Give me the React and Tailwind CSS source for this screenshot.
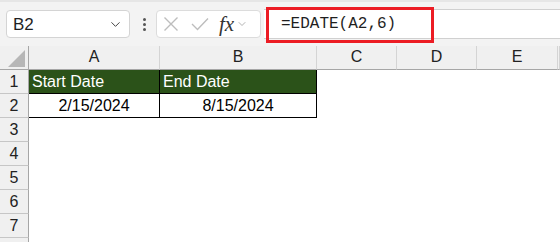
import { ChevronDown } from "lucide-react";

const cols = ["A", "B", "C", "D", "E", ""];
const rows = [1, 2, 3, 4, 5, 6, 7, 8];

function Cell({ row, col }) {
  if (row === 1 && col < 2) {
    return (
      <div className="h-[24px] bg-[#2b5219] border-r border-b border-black px-[3px] text-white leading-[23px]">
        {col === 0 ? "Start Date" : "End Date"}
      </div>
    );
  }
  if (row === 2 && col < 2) {
    return (
      <div className="h-[24px] bg-white border-r border-b border-black text-center text-black leading-[23px]">
        {col === 0 ? "2/15/2024" : "8/15/2024"}
      </div>
    );
  }
  return <div className="h-[24px] bg-white" />;
}

export default function App() {
  return (
    <div className="w-[560px] h-[242px] overflow-hidden bg-white font-['Liberation_Sans',Arial,sans-serif]">
      <div className="relative h-[46px] bg-[#f3f3f3] flex items-start pt-[10px] pl-[6px] border-t-2 border-[#e6e6e6]">
        <div className="w-[124px] h-[28px] bg-white border border-[#d4d4d4] rounded-[4px] flex items-center justify-between pl-[6px] pr-[6px] -mt-[2px]">
          <span className="text-[17px] leading-none text-[#1f1f1f]">B2</span>
          <ChevronDown size={15} strokeWidth={1.6} className="text-[#444]" />
        </div>
        <div className="ml-[13px] mr-[10px] h-[28px] -mt-[2px] flex flex-col justify-center gap-[2px]">
          <span className="w-[3px] h-[3px] bg-[#555] rounded-full" />
          <span className="w-[3px] h-[3px] bg-[#555] rounded-full" />
          <span className="w-[3px] h-[3px] bg-[#555] rounded-full" />
        </div>
        <div className="w-[105px] h-[28px] -mt-[2px] bg-white border border-[#dcdcdc] rounded-[4px] flex items-center pl-[6px]">
          <svg width="16" height="16" viewBox="0 0 16 16" className="mr-[12px]">
            <path d="M1.5 1.5 L14.5 14.5 M14.5 1.5 L1.5 14.5" stroke="#bdbdbd" strokeWidth="1.4" fill="none" />
          </svg>
          <svg width="18" height="14" viewBox="0 0 18 14" className="mr-[10px]">
            <path d="M1 7 L6.5 12.5 L17 1.5" stroke="#bdbdbd" strokeWidth="1.4" fill="none" />
          </svg>
          <span className="font-['Liberation_Serif',serif] italic text-[21px] leading-none text-[#333] mr-[2px]">
            fx
          </span>
          <ChevronDown size={12} strokeWidth={1.5} className="text-[#999]" />
        </div>
        <div className="flex-1 h-[30px] -mt-[3px] ml-[3px] bg-white border-y border-[#d0d0d0] flex items-center pl-[17px]">
          <span className="font-['Liberation_Mono',monospace] text-[16px] text-[#1f1f1f]">=EDATE(A2,6)</span>
        </div>
        <div className="absolute left-[266px] top-[5px] w-[168px] h-[36px] border-[3.5px] border-[#ec1c24] pointer-events-none" />
      </div>
      <div className="grid grid-cols-[29px_131px_157px_80px_80px_81px_1fr] text-[16px]">
        <div className="h-[24px] bg-[#f0f0f0] border-r border-b border-[#a6a6a6] flex items-end justify-end pr-[3px] pb-[2px]">
          <svg width="17" height="17" viewBox="0 0 17 17">
            <path d="M17 0 L17 17 L0 17 Z" fill="#b7b7b7" />
          </svg>
        </div>
        {cols.map((c, i) => (
          <div
            key={i}
            className="h-[24px] bg-[#f0f0f0] border-r border-[#d4d4d4] border-b border-b-[#a6a6a6] text-center text-[#222] leading-[22px]"
          >
            {c}
          </div>
        ))}
        {rows.map((r) => (
          <div key={r} className="contents">
            <div className="h-[24px] bg-[#f0f0f0] border-r border-[#a6a6a6] border-b border-b-[#c6c6c6] text-center text-[#222] leading-[23px]">
              {r < 8 ? r : ""}
            </div>
            {cols.map((c, i) => (
              <Cell key={i} row={r} col={i} />
            ))}
          </div>
        ))}
      </div>
    </div>
  );
}
